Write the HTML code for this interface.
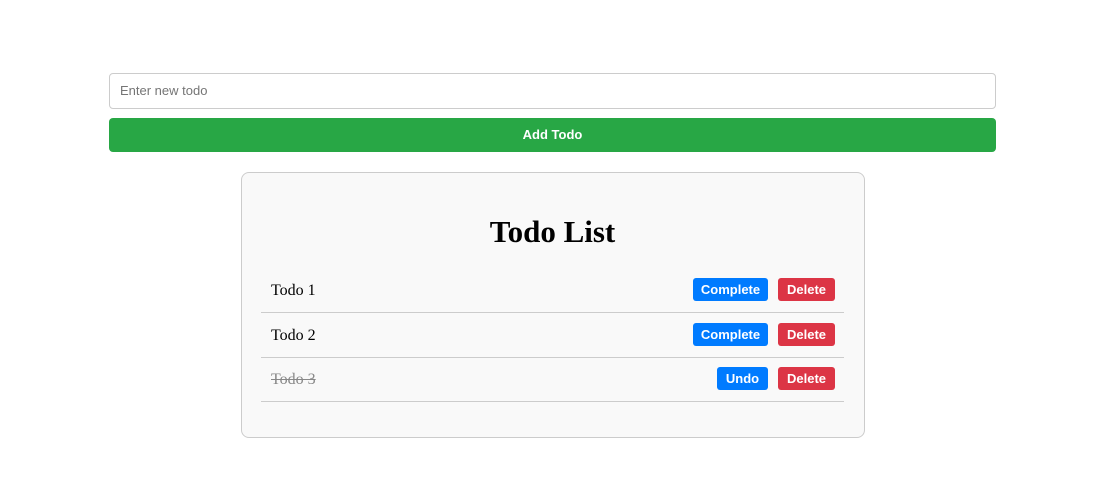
<!DOCTYPE html>
<html><head><style>
body{margin:0;background:#fff;font-family:"Liberation Serif",serif;}
.inp{position:absolute;left:109px;top:73px;height:34px;border:1px solid #ccc;border-radius:4px;box-sizing:content-box;font:13px "Liberation Sans",sans-serif;color:#757575;line-height:34px;padding-left:10px;width:875px}
.add{position:absolute;left:109px;top:118px;width:887px;height:34px;background:#28a745;border-radius:4px;color:#fff;font:bold 13px "Liberation Sans",sans-serif;text-align:center;line-height:34px}
.card{position:absolute;left:241px;top:172px;width:622px;height:264px;border:1px solid #ccc;border-radius:8px;background:#f9f9f9}
h1{position:absolute;left:0;right:0;top:213px;margin:0;padding-left:5px;text-align:center;font-size:31px;font-weight:bold;line-height:38px}
.row{position:absolute;left:261px;width:583px;height:44px;border-bottom:1px solid #ccc;font-size:16px}
.row .t{position:absolute;left:10px;top:13px;line-height:20px}
.b{position:absolute;top:10px;height:23px;border-radius:3px;color:#fff;font:13px "Liberation Sans",sans-serif;font-weight:600;line-height:23px;text-align:center}
.c{background:#007bff}.d{background:#dc3545;left:517px;width:57px}
</style></head><body>
<div class="inp">Enter new todo</div>
<div class="add">Add Todo</div>
<div class="card"></div>
<h1>Todo List</h1>
<div class="row" style="top:268px"><span class="t">Todo 1</span><div class="b c" style="left:432px;width:75px">Complete</div><div class="b d">Delete</div></div>
<div class="row" style="top:313px"><span class="t">Todo 2</span><div class="b c" style="left:432px;width:75px">Complete</div><div class="b d">Delete</div></div>
<div class="row" style="top:357px"><span class="t" style="text-decoration:line-through;color:#888">Todo 3</span><div class="b c" style="left:456px;width:51px">Undo</div><div class="b d">Delete</div></div>
</body></html>
